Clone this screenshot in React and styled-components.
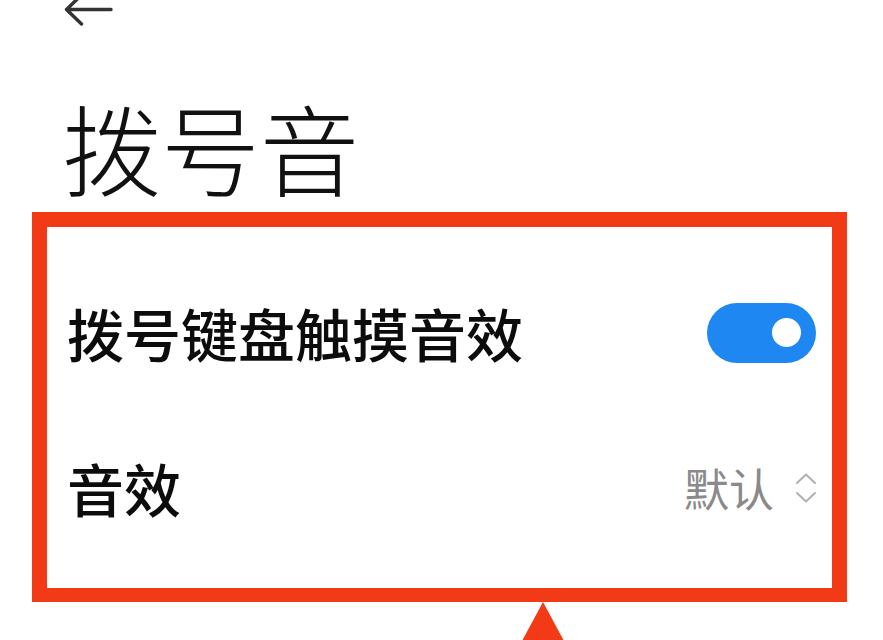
import React from "react";
import styled, { createGlobalStyle } from "styled-components";

const Global = createGlobalStyle`
  html, body { margin: 0; padding: 0; background: #ffffff; }
  body { font-family: "Noto Sans CJK SC", "Noto Sans", sans-serif; overflow: hidden; }
`;

const Page = styled.div`
  position: relative;
  width: 883px;
  height: 640px;
  overflow: hidden;
  background: #fff;
`;

const Header = styled.div`
  height: 24px;
  padding-left: 63px;
  display: flex;
  align-items: flex-start;
`;

const BackIcon = styled.svg`
  margin-top: -6px;
  flex: none;
`;

const Title = styled.h1`
  margin: 0;
  padding: 56px 0 0 62px;
  font-size: 99px;
  line-height: 132px;
  font-weight: 300;
  color: #111;
`;

const Frame = styled.div`
  margin: 0 0 0 32px;
  width: 815px;
  height: 390px;
  box-sizing: border-box;
  border: 15px solid #f23a16;
  border-bottom-width: 14px;
  padding: 28px 16px 23px 20px;
  display: flex;
  flex-direction: column;
`;

const Row = styled.div`
  height: 155px;
  display: flex;
  align-items: center;
  justify-content: space-between;
`;

const Label = styled.span`
  font-size: 57px;
  font-weight: 500;
  color: #0c0c0c;
  line-height: 1;
`;

const Toggle = styled.div`
  width: 109px;
  height: 60px;
  border-radius: 30px;
  background: #1f87f2;
  display: flex;
  align-items: center;
  justify-content: flex-end;
  padding-right: 15px;
  box-sizing: border-box;
`;

const Knob = styled.div`
  width: 29px;
  height: 29px;
  border-radius: 50%;
  background: #fff;
`;

const Value = styled.div`
  display: flex;
  align-items: center;
  gap: 22px;
`;

const ValueText = styled.span`
  font-size: 45px;
  color: #8a8a8a;
  line-height: 1;
`;

const Pointer = styled.svg`
  position: absolute;
  left: 522px;
  top: 602px;
`;

export default function App() {
  return (
    <Page>
      <Global />
      <Header>
        <BackIcon width="50" height="32" viewBox="0 -6 50 32">
          <path d="M48 9.5 H4 M18.5 -5 L3.5 9.5 L18.5 24" fill="none" stroke="#333" strokeWidth="3.4" strokeLinecap="round" strokeLinejoin="round" />
        </BackIcon>
      </Header>
      <Title>拨号音</Title>
      <Frame>
        <Row>
          <Label>拨号键盘触摸音效</Label>
          <Toggle><Knob /></Toggle>
        </Row>
        <Row>
          <Label>音效</Label>
          <Value>
            <ValueText>默认</ValueText>
            <svg width="20" height="30" viewBox="0 0 20 30">
              <path d="M1 10 L10 1.5 L19 10 M1 20 L10 28.5 L19 20" fill="none" stroke="#b0b0b0" strokeWidth="2" strokeLinecap="round" strokeLinejoin="round" />
            </svg>
          </Value>
        </Row>
      </Frame>
      <Pointer width="42" height="40" viewBox="0 0 42 40">
        <polygon points="21,0 42,39 0,39" fill="#f23a16" />
      </Pointer>
    </Page>
  );
}
